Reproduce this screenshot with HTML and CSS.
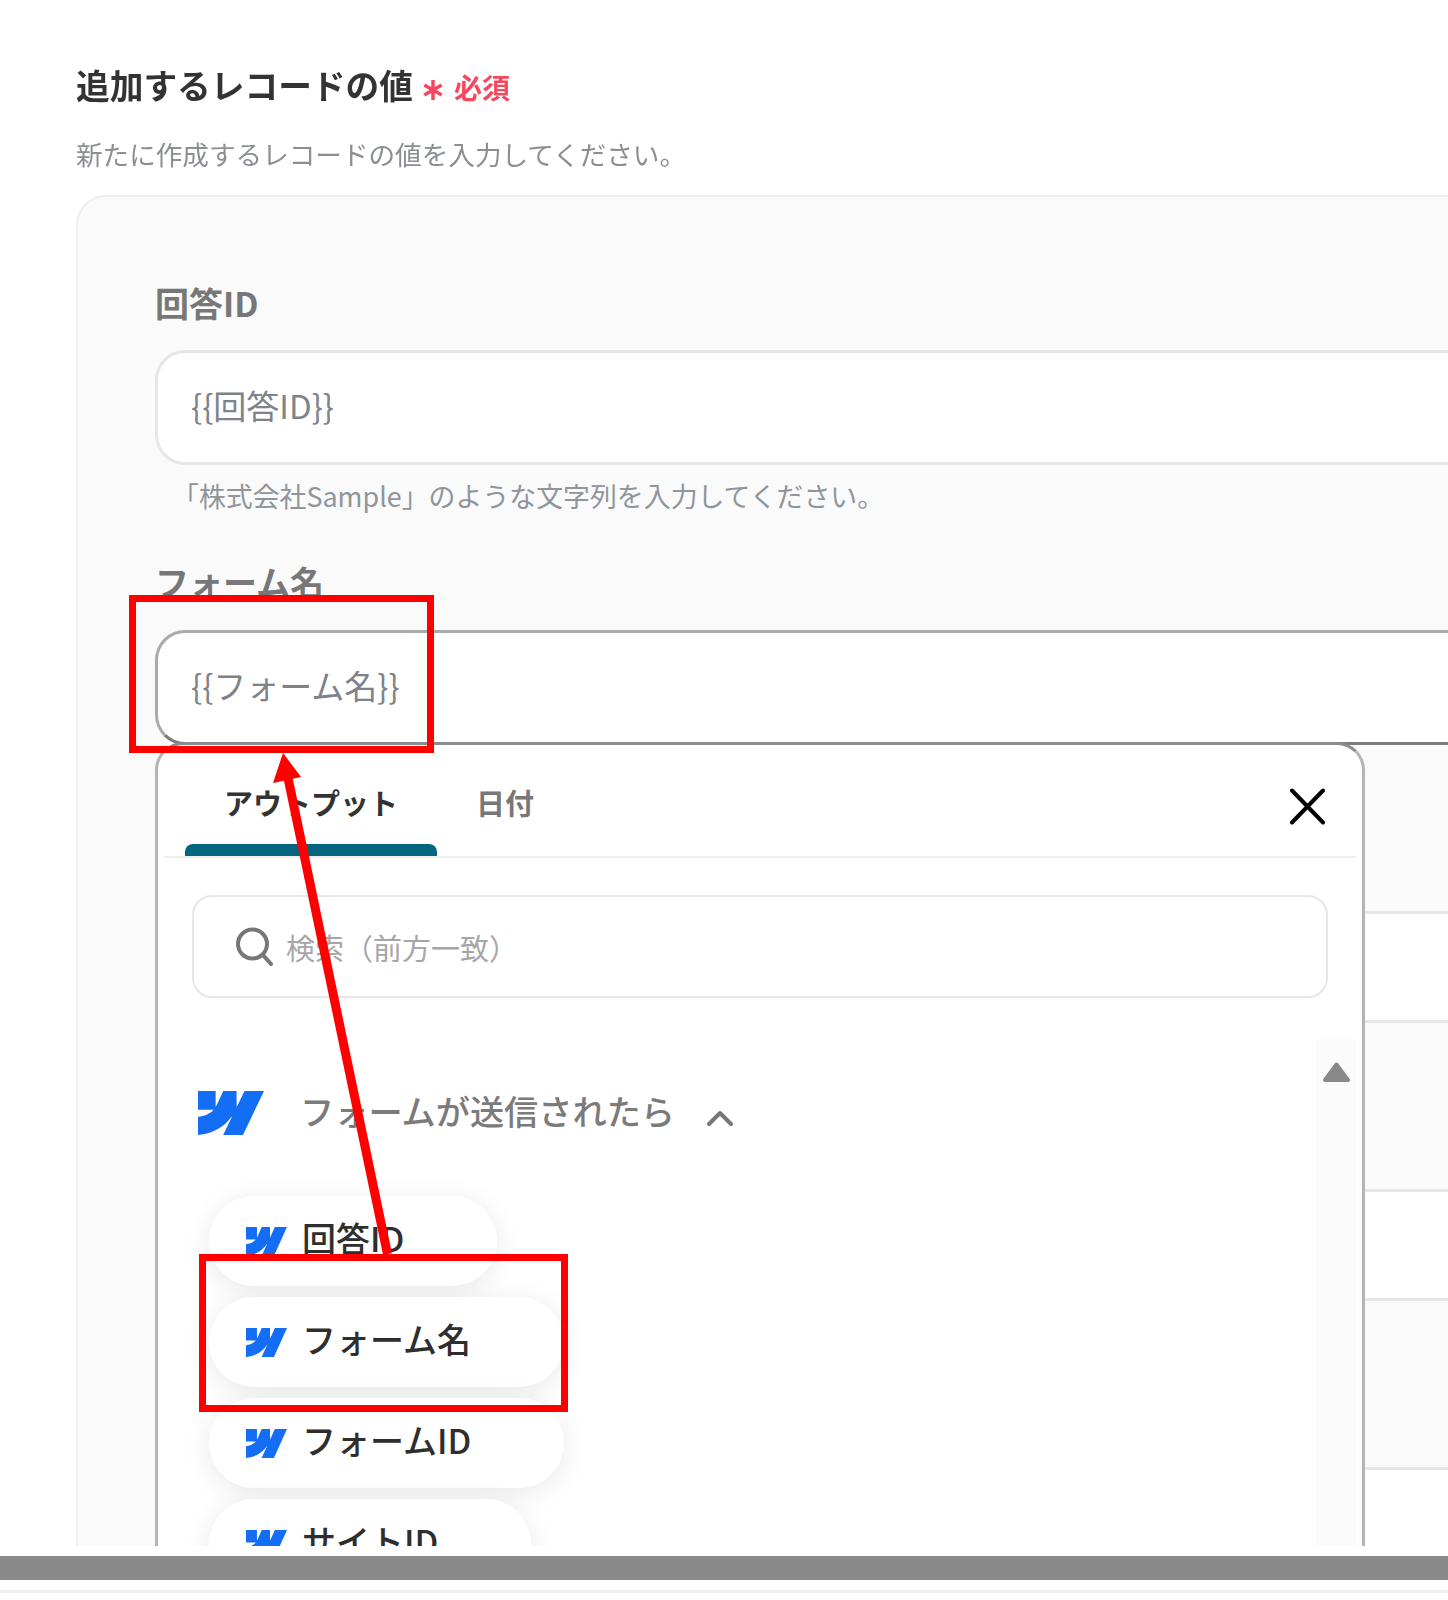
FILE: index.html
```html
<!DOCTYPE html>
<html lang="ja">
<head>
<meta charset="utf-8">
<title>追加するレコードの値</title>
<link rel="stylesheet" href="styles.css">
</head>
<body>
<div class="canvas">
  <svg class="defs" width="0" height="0" aria-hidden="true">
    <symbol id="wf" viewBox="0 0 1080 674" preserveAspectRatio="none">
      <path d="M1080 0L735.386 673.684H411.695L555.916 394.481H549.445C430.464 548.934 252.942 650.6 0 673.684V398.344C0 398.344 161.813 388.787 256.938 288.776H0V0.00637568H288.771V237.515L295.252 237.489L413.254 0.00637568H631.645V236.009L638.126 235.999L760.556 0H1080Z"/>
    </symbol>
  </svg>
  <main class="page">
    <header class="head">
      <h1 class="title">追加するレコードの値</h1>
      <span class="req"><svg class="req-star" viewBox="0 0 22 22"><path d="M11 1V21M2.300 6L19.700 16M19.700 6L2.300 16"/></svg>必須</span>
    </header>
    <p class="sub">新たに作成するレコードの値を入力してください。</p>
    <section class="card">
      <div class="field">
        <div class="label">回答ID</div>
        <div class="input"><span class="input-text">{{回答ID}}</span></div>
        <div class="hint">「株式会社Sample」のような文字列を入力してください。</div>
      </div>
      <div class="field field-open">
        <div class="label">フォーム名</div>
        <div class="input input-active"><span class="input-text">{{フォーム名}}</span></div>
      </div>
      <div class="field-rest"><div class="input-short"></div></div>
      <div class="field-rest"><div class="input-short"></div></div>
      <div class="field-rest"><div class="input-short"></div></div>

      <div class="popup">
        <div class="tabs">
          <div class="tab tab-on">アウトプット<span class="tab-bar"></span></div>
          <div class="tab">日付</div>
          <svg class="close" viewBox="0 0 35 37"><path d="M2 2.500L33 34.500M33 2.500L2 34.500"/></svg>
        </div>
        <div class="search">
          <svg class="search-ico" viewBox="0 0 37 39"><circle cx="16.500" cy="17" r="14.500"/><path d="M27 28L35 37"/></svg>
          <span class="search-text">検索（前方一致）</span>
        </div>
        <div class="body">
          <div class="list">
            <div class="group">
              <svg class="logo-lg"><use href="#wf"/></svg>
              <span class="group-name">フォームが送信されたら</span>
              <svg class="chev" viewBox="0 0 26 16"><path d="M2 14L13 3L24 14"/></svg>
            </div>
            <div class="pills">
              <div class="pill"><svg class="logo-sm"><use href="#wf"/></svg><span class="pill-text">回答ID</span></div>
              <div class="pill"><svg class="logo-sm"><use href="#wf"/></svg><span class="pill-text">フォーム名</span></div>
              <div class="pill"><svg class="logo-sm"><use href="#wf"/></svg><span class="pill-text">フォームID</span></div>
              <div class="pill"><svg class="logo-sm"><use href="#wf"/></svg><span class="pill-text">サイトID</span></div>
            </div>
          </div>
          <div class="track"><svg class="track-up" viewBox="0 0 27 20"><path d="M13.500 2.500L25 18H2Z"/></svg></div>
        </div>
      </div>
    </section>
  </main>
  <div class="bar"></div>
  <div class="bar-foot"></div>
  <svg class="marks" viewBox="0 0 1448 1600">
    <rect class="mark-box" x="132.500" y="598.500" width="298" height="151"/>
    <rect class="mark-box" x="202.500" y="1257.500" width="362" height="151"/>
    <path class="mark-line" d="M288 778L387.500 1254"/>
    <path class="mark-head" d="M283 753L301 777L273 783Z"/>
  </svg>
</div>
</body>
</html>
```
FILE: styles.css
```css
* { box-sizing: border-box; }
html, body { margin: 0; padding: 0; background: #fff; }
body {
  font-family: "Noto Sans CJK JP", "Noto Sans", sans-serif;
  color: #333;
}
.canvas { position: relative; width: 1448px; height: 1600px; overflow: hidden; }
.defs { position: absolute; }
.page {
  height: 1546px;
  overflow: hidden;
  padding: 61px 0 0 76px;
  filter: blur(0.6px);
}
.head { display: flex; align-items: center; height: 48px; }
.title {
  margin: 0;
  font-size: 33.700px;
  line-height: 48px;
  font-weight: 700;
  color: #333;
  white-space: nowrap;
}
.req {
  display: flex;
  align-items: center;
  margin: 3px 0 0 9px;
  font-size: 28px;
  line-height: 40px;
  font-weight: 700;
  color: #f6475f;
}
.req-star {
  width: 22px;
  height: 22px;
  margin: 6px 10px 0 0;
  fill: none;
  stroke: #f6475f;
  stroke-width: 3.500px;
}
.sub {
  margin: 27px 0 23px;
  font-size: 26.600px;
  line-height: 36px;
  color: #8b8f94;
  white-space: nowrap;
}
.card {
  position: relative;
  width: 1500px;
  height: 1400px;
  padding: 84px 0 0 77px;
  background: #fafafa;
  border: 2px solid #eceef0;
  border-radius: 30px 0 0 0;
}
.field { margin-bottom: 46px; }
.field-open { margin-bottom: 0; padding-bottom: 96px; }
.label {
  height: 44px;
  margin-bottom: 25px;
  font-size: 34px;
  line-height: 44px;
  font-weight: 700;
  color: #777;
}
.field-open .label { margin-bottom: 26px; }
.input {
  display: flex;
  align-items: center;
  height: 115px;
  padding: 0 33px;
  background: #fff;
  border: 3px solid #e4e7ea;
  border-right: 0;
  border-radius: 30px 0 0 30px;
  font-size: 33px;
  color: #7d8388;
}
.input-text { margin-bottom: 6px; }
.input-active { border-color: #aaa #aaa #7c7c7c; }
.hint {
  margin: 13px 0 0 17px;
  font-size: 26.900px;
  line-height: 36px;
  color: #8f959b;
  white-space: nowrap;
}
.field-rest { padding: 70px 0 96px; }
.input-short { height: 112px; background: #fff; border: solid #e4e7ea; border-width: 3px 0; }
.popup {
  position: absolute;
  left: 77px;
  top: 545px;
  display: flex;
  flex-direction: column;
  width: 1210px;
  height: 830px;
  background: #fff;
  border: 3px solid #b4b4b4;
  border-top-color: #8c8c8c;
  border-radius: 28px 28px 0 0;
}
.tabs {
  display: flex;
  flex: none;
  height: 113px;
  margin: 0 6px;
  padding-left: 21px;
  border-bottom: 2px solid #eeeeee;
}
.tab {
  position: relative;
  height: 111px;
  padding: 0 39px;
  font-size: 29px;
  line-height: 114px;
  font-weight: 700;
  color: #777;
}
.tab-on { color: #333; }
.tab-bar {
  position: absolute;
  left: 0;
  right: 0;
  bottom: 0;
  height: 12px;
  background: #05647f;
  border-radius: 8px 8px 0 0;
}
.close {
  width: 35px;
  height: 37px;
  margin: 43px 31px 0 auto;
  fill: none;
  stroke: #000;
  stroke-width: 4px;
  stroke-linecap: round;
}
.search {
  display: flex;
  flex: none;
  align-items: center;
  gap: 13px;
  height: 103px;
  margin: 37px 34px 0 34px;
  padding-left: 42px;
  border: 2.500px solid #e7e7e7;
  border-radius: 20px;
}
.search-ico {
  width: 37px;
  height: 39px;
  fill: none;
  stroke: #777;
  stroke-width: 4px;
  stroke-linecap: round;
}
.search-text { font-size: 29px; color: #a6a6a6; white-space: nowrap; }
.body { display: flex; flex: 1; margin: 41px 6px 0 0; min-height: 0; }
.list { flex: 1; padding: 52px 0 0 40px; }
.group { display: flex; align-items: center; height: 44px; }
.logo-lg { width: 66px; height: 44px; margin-right: 36px; fill: #146ef5; }
.group-name { margin-bottom: 6px; font-size: 34.200px; font-weight: 500; color: #7b7b7b; white-space: nowrap; }
.chev {
  width: 26px;
  height: 16px;
  margin: 10px 0 0 32px;
  fill: none;
  stroke: #777;
  stroke-width: 4px;
  stroke-linecap: round;
  stroke-linejoin: round;
}
.pills {
  display: flex;
  flex-direction: column;
  align-items: flex-start;
  gap: 11px;
  margin: 61px 0 0 11px;
}
.pill {
  display: flex;
  align-items: center;
  gap: 15px;
  height: 90px;
  padding: 0 93px 0 37px;
  background: #fff;
  border-radius: 45px;
  box-shadow: 0 5px 28px rgba(0, 0, 0, 0.09);
  font-size: 34px;
  font-weight: 500;
  color: #2e2e2e;
  white-space: nowrap;
}
.pill-text { margin-bottom: 7px; }
.logo-sm { width: 41px; height: 29px; fill: #146ef5; }
.track { width: 40px; padding-top: 23px; background: #fbfbfb; text-align: center; }
.track-up { width: 27px; height: 20px; fill: #888; stroke: #888; stroke-width: 4px; stroke-linejoin: round; }
.bar {
  height: 24px;
  margin-top: 10px;
  background: #898989;
  filter: blur(0.5px);
}
.bar-foot { height: 3px; margin-top: 10px; background: #eeeeee; filter: blur(0.5px); }
.marks { position: absolute; left: 0; top: 0; width: 1448px; height: 1600px; pointer-events: none; }
.mark-box { fill: none; stroke: #ff0000; stroke-width: 7px; }
.mark-line { fill: none; stroke: #ff0000; stroke-width: 9px; }
.mark-head { fill: #ff0000; }
```
